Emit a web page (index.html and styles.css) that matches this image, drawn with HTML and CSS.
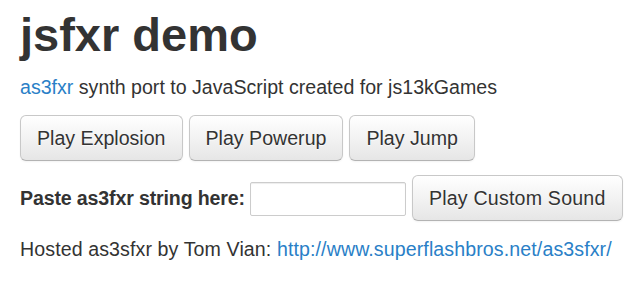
FILE: index.html
```html
<!DOCTYPE html>
<html>
<head>
<meta charset="utf-8">
<title>jsfxr demo</title>
<link rel="stylesheet" href="styles.css">
</head>
<body>
<h1 class="title">jsfxr demo</h1>
<p class="intro"><a class="link" href="#">as3fxr</a> synth port to JavaScript created for js13kGames</p>
<div class="btn-row">
  <button class="btn">Play Explosion</button>
  <button class="btn">Play Powerup</button>
  <button class="btn">Play Jump</button>
</div>
<div class="custom-row">
  <label class="label">Paste as3fxr string here:</label>
  <input class="field" type="text">
  <button class="btn btn-wide">Play Custom Sound</button>
</div>
<p class="footer">Hosted as3sfxr by Tom Vian: <a class="link" href="#">http://www.superflashbros.net/as3sfxr/</a></p>
</body>
</html>
```
FILE: styles.css
```css
html, body {
  margin: 0;
  padding: 0;
  background: #fff;
}
body {
  padding: 0 20px;
  font-family: "Liberation Sans", Arial, sans-serif;
  font-size: 19.6px;
  line-height: 28px;
  color: #333;
}
.title {
  margin: 7px 0 10px;
  font-size: 47px;
  line-height: 56px;
  font-weight: bold;
  color: #333;
}
.intro {
  margin: 0 0 14px;
}
.link {
  color: #2a7fc7;
  text-decoration: none;
}
.btn-row {
  display: flex;
  gap: 6px;
}
.btn {
  flex-shrink: 0;
  white-space: nowrap;
  font-family: "Liberation Sans", Arial, sans-serif;
  font-size: 19.6px;
  line-height: 28px;
  color: #333;
  padding: 8px 16px;
  border: 1px solid #c8c8c8;
  border-bottom-color: #b3b3b3;
  border-radius: 6px;
  background: linear-gradient(to bottom, #ffffff, #e6e6e6);
  box-shadow: inset 0 1px 0 rgba(255,255,255,.2), 0 1px 2px rgba(0,0,0,.05);
  text-shadow: 0 1px 1px rgba(255,255,255,.75);
  margin: 0;
}
.btn-wide {
  letter-spacing: 0.2px;
}
.custom-row {
  display: flex;
  align-items: center;
  gap: 6px;
  margin-top: 14px;
}
.label {
  flex-shrink: 0;
  white-space: nowrap;
  font-weight: bold;
  letter-spacing: -0.15px;
  margin-right: -1px;
}
.field {
  flex-shrink: 0;
  width: 156px;
  height: 34px;
  box-sizing: border-box;
  margin: 2px 0 0;
  padding: 4px 8px;
  border: 1px solid #ccc;
  border-radius: 2px;
  box-shadow: inset 0 1px 1px rgba(0,0,0,.075);
  font-family: "Liberation Sans", Arial, sans-serif;
  font-size: 19.6px;
}
.footer {
  margin: 14px 0 0;
  letter-spacing: 0.1px;
}
```
